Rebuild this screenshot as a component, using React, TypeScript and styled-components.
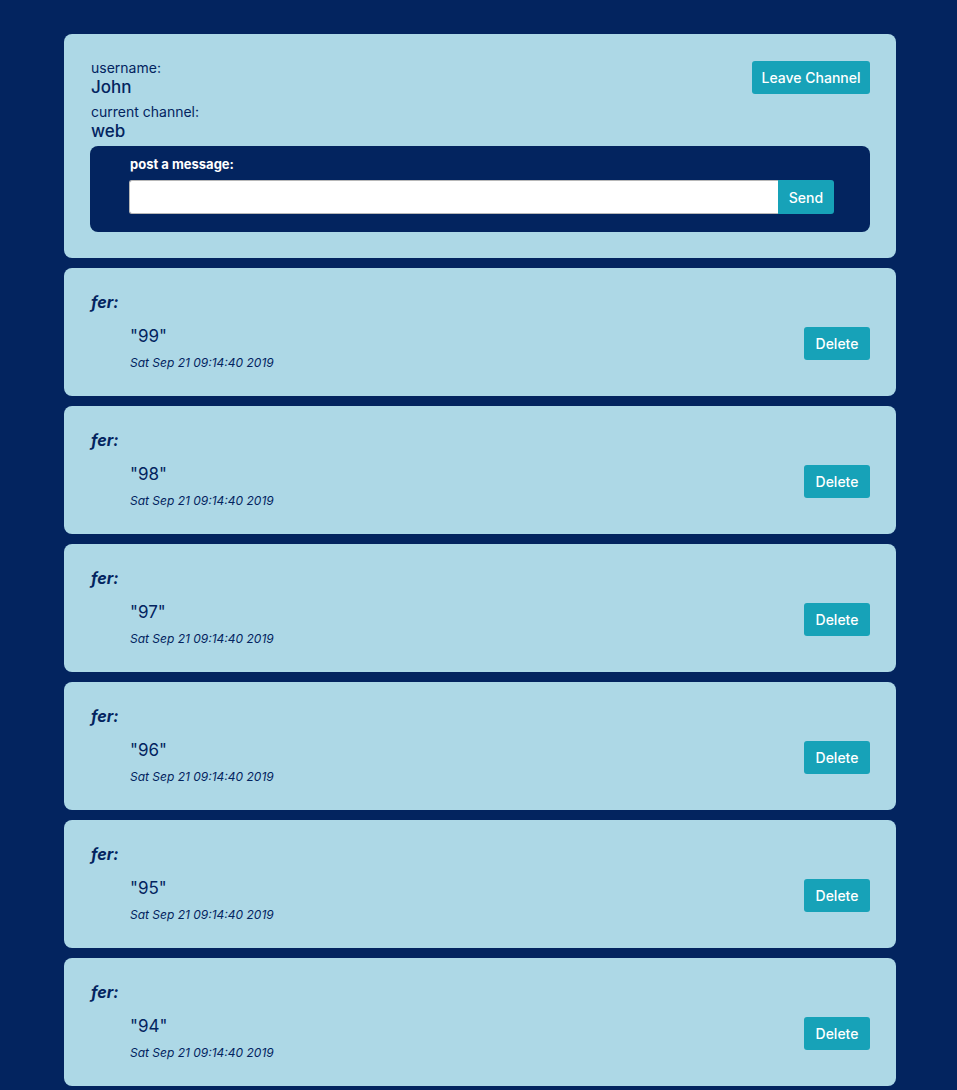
import React from "react";
import styled, { createGlobalStyle } from "styled-components";

const Global = createGlobalStyle`
  html, body { margin: 0; padding: 0; background: #03245f; }
  body { font-family: Inter, "Liberation Sans", sans-serif; color: #03245f; }
  * { box-sizing: border-box; }
`;

const Page = styled.div`
  padding: 34px 0 20px 64px;
  display: flex;
  flex-direction: column;
  gap: 10px;
`;

const Card = styled.div`
  width: 832px;
  background: #add8e6;
  border-radius: 8px;
  padding: 26px 26px 26px 26px;
`;

const TopRow = styled.div`
  display: flex;
  justify-content: space-between;
  align-items: flex-start;
`;

const Info = styled.div`
  display: flex;
  flex-direction: column;
  padding-left: 1px;
`;

const Label = styled.div<{ $first?: boolean }>`
  font-size: 14px;
  line-height: 17px;
  margin-top: ${(p) => (p.$first ? "-1px" : "6px")};
`;

const Value = styled.div`
  font-size: 17px;
  font-weight: 500;
  line-height: 20px;
  margin-top: 1px;
`;

const Button = styled.button`
  background: #17a2b8;
  color: #fff;
  border: none;
  border-radius: 3px;
  font-family: Inter, "Liberation Sans", sans-serif;
  font-size: 14px;
  font-weight: 500;
  height: 33px;
  padding: 0 12px;
  white-space: nowrap;
  cursor: pointer;
`;

const LeaveButton = styled(Button)`
  margin-top: 1px;
  width: 118px;
  padding: 0;
`;

const PostBox = styled.form`
  margin-top: 5px;
  background: #03245f;
  border-radius: 8px;
  padding: 10px 36px 18px 39px;
`;

const PostLabel = styled.div`
  color: #fff;
  font-size: 13px;
  font-weight: 700;
  line-height: 16px;
  margin-bottom: 8px;
  padding-left: 1px;
`;

const InputRow = styled.div`
  display: flex;
`;

const Input = styled.input`
  flex: 1;
  height: 34px;
  border: 1px solid #b8b8b8;
  border-right: none;
  border-radius: 3px 0 0 3px;
  background: #fff;
  font-size: 14px;
  padding: 0 8px;
`;

const SendButton = styled(Button)`
  border-radius: 0 3px 3px 0;
  width: 56px;
  height: 34px;
  padding: 0;
`;

const MsgCard = styled(Card)`
  padding: 24px 26px 26px 27px;
  height: 128px;
`;

const Author = styled.div`
  font-size: 16px;
  font-weight: 700;
  font-style: italic;
  line-height: 20px;
`;

const MsgRow = styled.div`
  display: flex;
  justify-content: space-between;
  align-items: center;
  margin-top: 13px;
`;

const MsgBody = styled.div`
  padding-left: 39px;
  display: flex;
  flex-direction: column;
  gap: 8px;
`;

const MsgText = styled.div`
  font-size: 17px;
  line-height: 22px;
`;

const MsgDate = styled.div`
  font-size: 12px;
  font-style: italic;
  line-height: 15px;
`;

const DeleteButton = styled(Button)`
  width: 66px;
  padding: 0;
  margin-bottom: 9px;
`;

const messages = [99, 98, 97, 96, 95, 94];

export default function App() {
  return (
    <>
      <Global />
      <Page>
        <Card>
          <TopRow>
            <Info>
              <Label $first>username:</Label>
              <Value>John</Value>
              <Label>current channel:</Label>
              <Value>web</Value>
            </Info>
            <LeaveButton>Leave Channel</LeaveButton>
          </TopRow>
          <PostBox onSubmit={(e) => e.preventDefault()}>
            <PostLabel>post a message:</PostLabel>
            <InputRow>
              <Input type="text" />
              <SendButton type="submit">Send</SendButton>
            </InputRow>
          </PostBox>
        </Card>
        {messages.map((m) => (
          <MsgCard key={m}>
            <Author>fer:</Author>
            <MsgRow>
              <MsgBody>
                <MsgText>"{m}"</MsgText>
                <MsgDate>Sat Sep 21 09:14:40 2019</MsgDate>
              </MsgBody>
              <DeleteButton>Delete</DeleteButton>
            </MsgRow>
          </MsgCard>
        ))}
      </Page>
    </>
  );
}
